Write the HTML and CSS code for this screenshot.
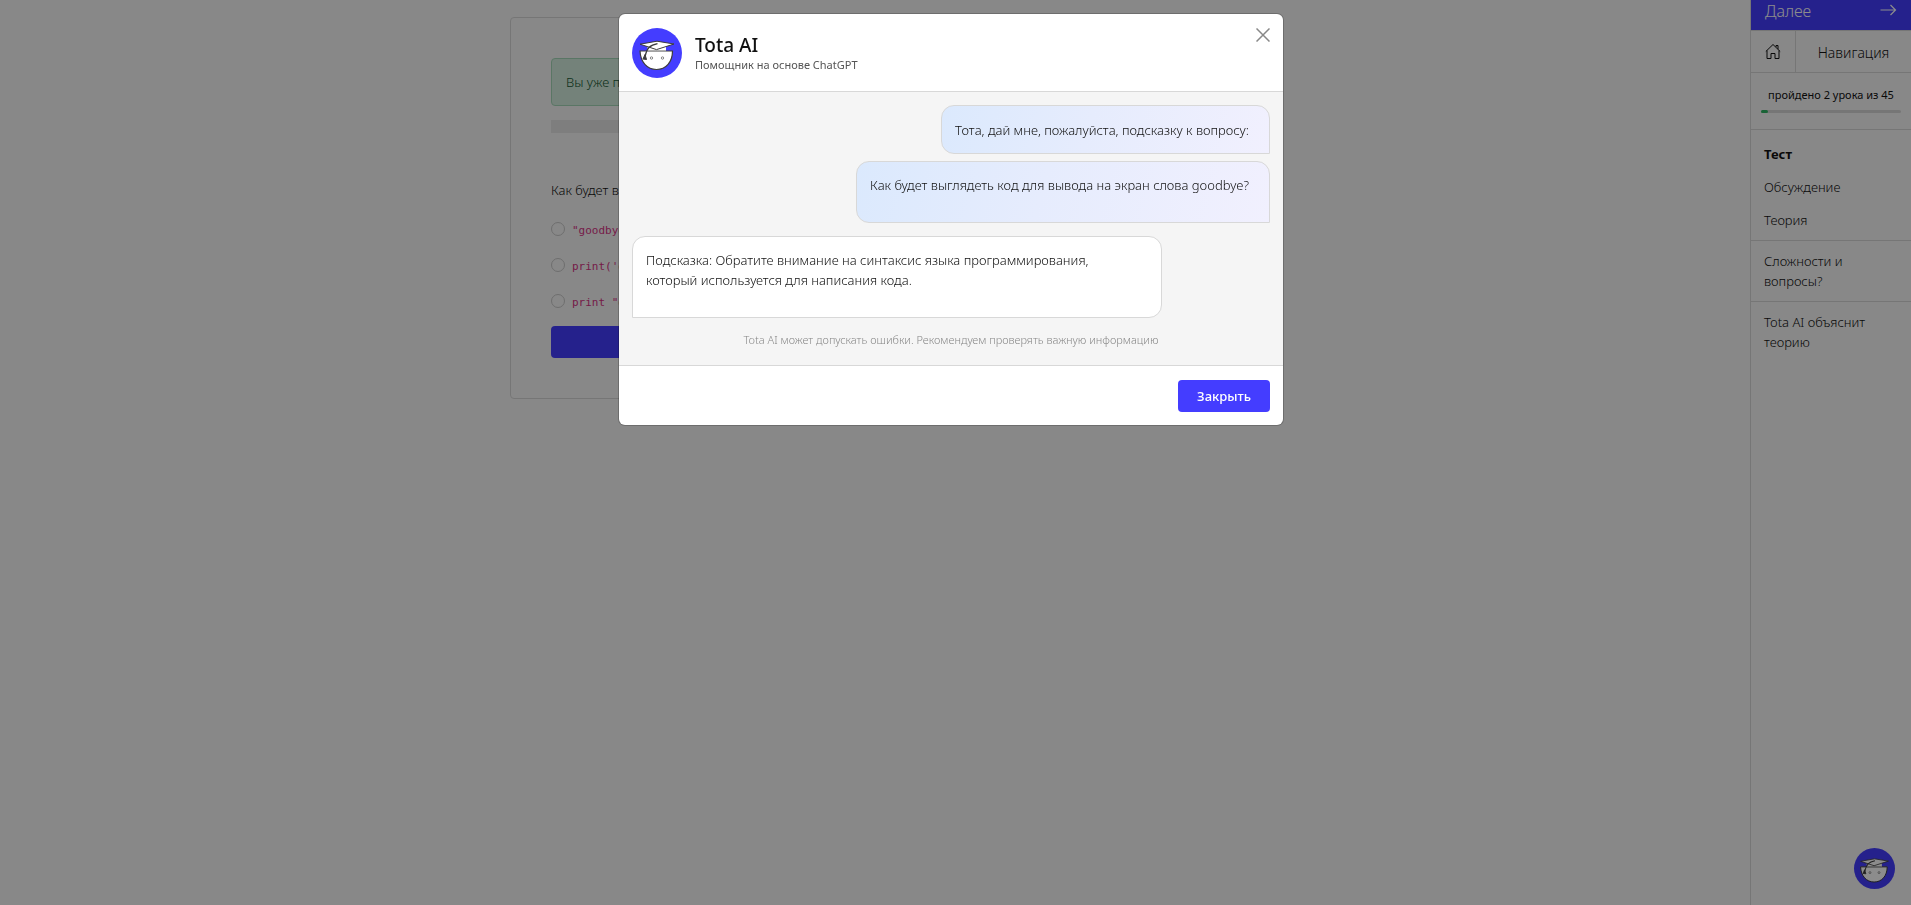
FILE: index.html
```html
<!DOCTYPE html>
<html lang="ru">
<head>
<meta charset="utf-8">
<meta name="viewport" content="width=device-width, initial-scale=1">
<title>Тест</title>
<link rel="stylesheet" href="styles.css">
</head>
<body>
<svg class="sprite" aria-hidden="true">
  <symbol id="tota" viewBox="0 0 50 50">
    <circle cx="25" cy="25" r="25" fill="#443dff"/>
    <path d="M8 23H40.500C40.500 34 34 41.500 24.500 41.500C15 41.500 8.500 34 8 23Z" fill="#fff" stroke="#3c3c3c" stroke-width="1.200"/>
    <path d="M15.500 18.500V23.600H34V18.500Z" fill="#fff"/>
    <path d="M15.500 23H34" stroke="#8c8c8c" stroke-width="1.400"/>
    <path d="M8 16.200L25 13.200L42 16L24.500 21.600Z" fill="#fff" stroke="#3c3c3c" stroke-width="1"/>
    <path d="M25.500 15.600C18 17 15 20 13.200 28" fill="none" stroke="#3c3c3c" stroke-width="1.300"/>
    <path d="M13 26.500L11 31L14.500 31.500Z" fill="#3c3c3c" stroke="#3c3c3c"/>
    <circle cx="19.500" cy="30" r="1.200" fill="#fff" stroke="#777" stroke-width=".9"/>
    <circle cx="30.500" cy="30" r="1.200" fill="#fff" stroke="#777" stroke-width=".9"/>
  </symbol>
</svg>

<div class="page">
  <main class="content">
    <form class="card">
      <div class="alert">Вы уже прошли</div>
      <div class="strip"></div>
      <fieldset class="question">
        <legend>Как будет выглядеть код?</legend>
        <label class="option"><input type="radio" name="answer"><code>"goodbye"</code></label>
        <label class="option"><input type="radio" name="answer"><code>print('goodbye')</code></label>
        <label class="option"><input type="radio" name="answer"><code>print "goodbye"</code></label>
      </fieldset>
      <button class="btn" type="button" aria-label="Ответить"></button>
    </form>
  </main>
  <aside class="sidebar">
    <a class="next" href="#next">Далее
      <svg width="17" height="12" viewBox="0 0 17 12" fill="none" stroke="currentColor" stroke-width="1.200"><path d="M.5 6H15.500M10.500 1L15.500 6L10.500 11"/></svg>
    </a>
    <nav class="tools">
      <a class="home" href="#home" aria-label="Главная">
        <svg width="16" height="17" viewBox="0 0 16 17" fill="none" stroke="currentColor" stroke-width="1"><path d="M.8 8.500L8 1.500L15.200 8.500M2 7.500V15.500H6V10.500H10V15.500H14V7.500M11 4V2.500H13V6.200"/></svg>
      </a>
      <a class="navlink" href="#nav">Навигация</a>
    </nav>
    <div class="progress">
      <span>пройдено 2 урока из 45</span>
      <div class="track"><div class="fill"></div></div>
    </div>
    <nav class="links">
      <a class="current" href="#test">Тест</a>
      <a href="#talk">Обсуждение</a>
      <a href="#theory">Теория</a>
    </nav>
    <a class="block" href="#help">Сложности и вопросы?</a>
    <a class="block" href="#explain">Tota AI объяснит теорию</a>
  </aside>
</div>
<button class="fab" type="button" aria-label="Tota AI"><svg class="logo"><use href="#tota"/></svg></button>

<div class="overlay">
  <section class="modal" role="dialog" aria-labelledby="title">
    <header class="head">
      <svg class="logo"><use href="#tota"/></svg>
      <div class="names">
        <h1 id="title">Tota AI</h1>
        <p>Помощник на основе ChatGPT</p>
      </div>
      <button class="close" type="button" aria-label="Закрыть окно">
        <svg width="14" height="14" viewBox="0 0 14 14" fill="none" stroke="currentColor" stroke-width="1.500"><path d="M.5 .5L13.500 13.500M13.500 .5L.5 13.500"/></svg>
      </button>
    </header>
    <div class="chat">
      <p class="bubble mine">Тота, дай мне, пожалуйста, подсказку к вопросу:</p>
      <p class="bubble mine quoted">Как будет выглядеть код для вывода на экран слова goodbye?</p>
      <p class="bubble reply">Подсказка: Обратите внимание на синтаксис языка программирования, который используется для написания кода.</p>
      <p class="note">Tota AI может допускать ошибки. Рекомендуем проверять важную информацию</p>
    </div>
    <footer class="foot"><button class="btn" type="button">Закрыть</button></footer>
  </section>
</div>
</body>
</html>
```
FILE: styles.css
```css
* { box-sizing: border-box; }
body {
  margin: 0;
  background: #f8f8f8;
  color: #111;
  font: 330 13px/20px "Noto Sans", "Open Sans", sans-serif;
}
p, h1 { margin: 0; }
a { color: inherit; text-decoration: none; }
button { border: 0; padding: 0; background: none; cursor: pointer; font: inherit; }
svg { display: block; }
.sprite { position: absolute; width: 0; height: 0; }

.page { display: grid; grid-template-columns: 1fr 161px; min-height: 100vh; }
.content { padding: 17px 20px; }
.card {
  max-width: 730px;
  margin: 0 auto;
  padding: 40px;
  border: 1px solid #d8d8d8;
  border-radius: 4px;
}
.alert {
  padding: 13px 14px;
  border: 1px solid #a5d8b9;
  border-radius: 4px;
  background: #d4edde;
  color: #155732;
}
.strip { height: 13px; margin-top: 14px; background: #e5e5e5; }
.question { margin: 47px 0 0; padding: 0; border: 0; }
.question legend { padding: 0; margin-bottom: 11px; }
.option { display: flex; align-items: center; gap: 7px; height: 36px; }
.option input {
  appearance: none;
  width: 14px;
  height: 14px;
  margin: 0;
  border: 1px solid #c8c8c8;
  border-radius: 50%;
}
.option code { padding-top: 3px; color: #d63384; font: 11px/20px "DejaVu Sans Mono", monospace; }
.btn {
  height: 32px;
  padding: 0 19px;
  border-radius: 4px;
  background: #443dff;
  color: #fff;
  font-weight: 500;
}
.card .btn { display: block; width: 100%; margin-top: 7px; }

.sidebar { border-left: 1px solid #d8d8d8; }
.next {
  display: flex;
  align-items: flex-start;
  justify-content: space-between;
  height: 30px;
  padding: 0 14px;
  background: #443dff;
  color: #fff;
  font-size: 16px;
  line-height: 23px;
}
.next svg { margin-top: 4px; }
.tools {
  display: flex;
  height: 43px;
  border: solid #d8d8d8;
  border-width: 1px 0;
}
.home { display: grid; place-items: center; width: 45px; border-right: 1px solid #d8d8d8; }
.navlink { flex: 1; text-align: center; font-size: 14px; line-height: 43px; }
.progress {
  height: 57px;
  padding: 12px 10px 0;
  border-bottom: 1px solid #d8d8d8;
  text-align: center;
  font-size: 11px;
  font-weight: 400;
}
.progress span { white-space: nowrap; }
.track { height: 3px; margin-top: 5px; border-radius: 2px; background: #d8d8d8; }
.fill { width: 5%; height: 3px; border-radius: 2px; background: #2fb563; }
.links { display: grid; gap: 13px; padding: 14px 13px 10px; }
.current { font-weight: 700; }
.block { display: block; padding: 10px 13px; border-top: 1px solid #d8d8d8; }

.fab { position: fixed; right: 16px; bottom: 16px; }
.fab .logo { width: 41px; height: 41px; }

.overlay {
  position: fixed;
  inset: 0;
  padding: 14px 9px 0 0;
  background: rgba(0, 0, 0, .45);
}
.modal {
  max-width: 664px;
  margin: 0 auto;
  border-radius: 6px;
  background: #fff;
  box-shadow: 0 0 0 1px rgba(0, 0, 0, .2);
}
.head { display: flex; padding: 14px 13px 13px; border-bottom: 1px solid #d8d8d8; }
.head .logo { width: 50px; height: 50px; }
.names { flex: 1; padding: 5px 0 0 13px; }
.names h1 { font-size: 19px; line-height: 24px; font-weight: 500; }
.names p { color: #555; font-size: 11px; font-weight: 400; line-height: 16px; }
.close { align-self: flex-start; color: #888; }
.chat {
  display: flex;
  flex-direction: column;
  align-items: flex-start;
  padding: 13px 13px 15px;
  background: #f5f5f5;
}
.bubble { border: 1px solid #d8d8d8; border-radius: 13px; padding: 13px 20px 27px 13px; }
.mine {
  align-self: flex-end;
  border-bottom-right-radius: 0;
  background: linear-gradient(105deg, #dbe9fd, #e6ecfd 45%, #f1f0fe);
  padding: 14px 20px 13px 13px;
}
.quoted { margin-top: 7px; padding: 13px 20px 27px 13px; }
.reply { max-width: 83%; margin-top: 13px; border-bottom-left-radius: 0; background: #fff; }
.note { align-self: center; margin-top: 12px; color: #888; font-size: 11px; font-weight: 300; }
.foot { display: flex; justify-content: flex-end; padding: 14px 13px 13px; border-top: 1px solid #d8d8d8; }
```
